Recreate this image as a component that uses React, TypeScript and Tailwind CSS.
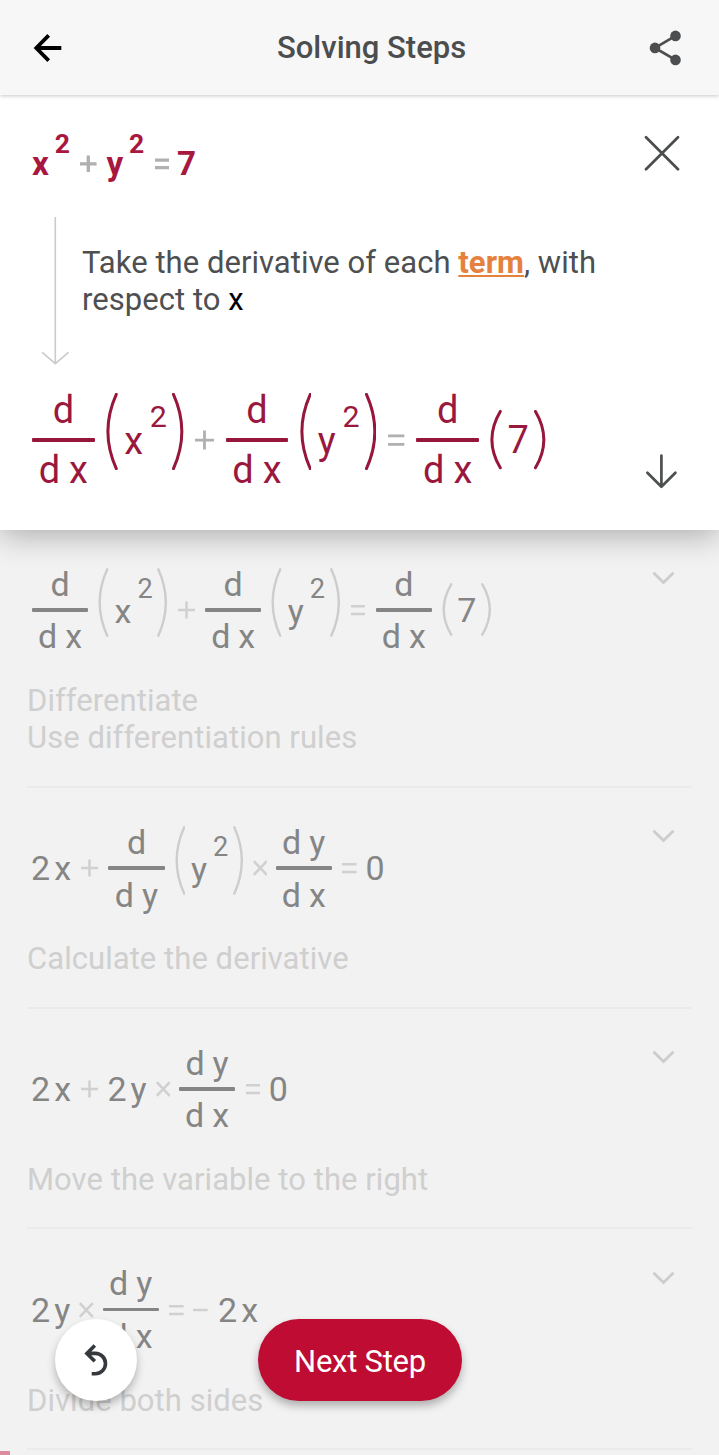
import React from "react";

type Tone = "title" | "active" | "muted";

const toneClass: Record<Tone, { text: string; bar: string; paren: string; op: string; stroke: number }> = {
  title: { text: "text-[#a8173f]", bar: "bg-[#a8173f]", paren: "text-[#a8173f]", op: "text-[#b0b0b0]", stroke: 2.7 },
  active: { text: "text-[#9a183d]", bar: "bg-[#96173b]", paren: "text-[#96173b]", op: "text-[#b0b0b0]", stroke: 2.7 },
  muted: { text: "text-[#858585]", bar: "bg-[#858585]", paren: "text-[#cdcdcd]", op: "text-[#d0d0d0]", stroke: 2.4 },
};

const ToneContext = React.createContext<Tone>("muted");

function Glyph({ children, className = "" }: { children: React.ReactNode; className?: string }) {
  return <span className={`block shrink-0 leading-none ${className}`}>{children}</span>;
}

function Sup({ children }: { children: React.ReactNode }) {
  return <span className="mb-[1.49em] ml-[0.22em] block shrink-0 text-[0.8em] leading-none">{children}</span>;
}

function Fraction({ top, bottom }: { top: string[]; bottom: string[] }) {
  const tone = toneClass[React.useContext(ToneContext)];
  return (
    <span className="flex w-[1.65em] shrink-0 flex-col items-center">
      <span className="flex gap-[0.235em]">
        {top.map((c, i) => (
          <Glyph key={i}>{c}</Glyph>
        ))}
      </span>
      <span className={`my-[0.23em] block h-[0.095em] w-full rounded-[1px] ${tone.bar}`} />
      <span className="flex gap-[0.235em]">
        {bottom.map((c, i) => (
          <Glyph key={i}>{c}</Glyph>
        ))}
      </span>
    </span>
  );
}

function Paren({ side, tall = false }: { side: "left" | "right"; tall?: boolean }) {
  const tone = toneClass[React.useContext(ToneContext)];
  const h = tall ? 69 : 53;
  const d =
    side === "left"
      ? `M9.2 1.3Q-5.8 ${h / 2} 9.2 ${h - 1.3}`
      : `M1.3 1.3Q16.3 ${h / 2} 1.3 ${h - 1.3}`;
  return (
    <svg
      viewBox={`0 0 10.5 ${h}`}
      className={`w-[0.309em] shrink-0 ${tone.paren} ${tall ? "mb-[0.44em] h-[2.03em]" : "h-[1.56em]"}`}
      fill="none"
      stroke="currentColor"
      strokeWidth={tone.stroke}
      strokeLinecap="round"
    >
      <path d={d} />
    </svg>
  );
}

const opPaths = {
  plus: { w: "w-[0.5em] mx-[0.3em]", box: "0 0 17 18", d: "M0 9H17M8.5 0.5V17.5" },
  equals: { w: "w-[0.43em] mx-[0.31em]", box: "0 0 14.6 18", d: "M0 5.3H14.6M0 12.9H14.6" },
  minus: { w: "w-[0.43em] ml-[-0.03em] mr-[0.3em]", box: "0 0 14.6 18", d: "M0 9H14.6" },
  times: { w: "w-[0.43em] ml-[0.27em] mr-[0.25em]", box: "0 0 14.6 18", d: "M0.8 2.2L13.8 15.8M13.8 2.2L0.8 15.8" },
};

function Op({ kind, bold = false }: { kind: keyof typeof opPaths; bold?: boolean }) {
  const tone = toneClass[React.useContext(ToneContext)];
  const p = opPaths[kind];
  return (
    <svg
      viewBox={p.box}
      className={`h-[0.53em] shrink-0 ${p.w} ${tone.op}`}
      fill="none"
      stroke="currentColor"
      strokeWidth={bold ? 3.4 : 2.5}
    >
      <path d={p.d} />
    </svg>
  );
}

function Equation({ tone, className = "", children }: { tone: Tone; className?: string; children: React.ReactNode }) {
  return (
    <ToneContext.Provider value={tone}>
      <div className={`flex shrink-0 items-center ${toneClass[tone].text} ${className}`}>{children}</div>
    </ToneContext.Provider>
  );
}

function SquaredGroup({ base }: { base: string }) {
  return (
    <span className="ml-[0.3em] flex items-center">
      <Paren side="left" tall />
      <Glyph className="mt-[0.04em] ml-[0.17em]">{base}</Glyph>
      <Sup>2</Sup>
      <span className="w-[0.135em]" />
      <Paren side="right" tall />
    </span>
  );
}

function DerivativeOfBothSides() {
  return (
    <>
      <Fraction top={["d"]} bottom={["d", "x"]} />
      <SquaredGroup base="x" />
      <Op kind="plus" />
      <Fraction top={["d"]} bottom={["d", "x"]} />
      <SquaredGroup base="y" />
      <Op kind="equals" />
      <Fraction top={["d"]} bottom={["d", "x"]} />
      <span className="ml-[0.3em] flex items-center">
        <Paren side="left" />
        <Glyph className="mx-[0.14em]">7</Glyph>
        <Paren side="right" />
      </span>
    </>
  );
}

function StepRow({ lines, first = false, children }: { lines: string[]; first?: boolean; children: React.ReactNode }) {
  return (
    <section
      className={`mx-[27px] flex shrink-0 flex-col border-b-2 border-[#ebebeb] ${
        first ? "h-[257.7px] pt-[30px]" : "h-[220.85px] pt-[30.4px]"
      }`}
    >
      <div className="flex items-start justify-between">
        {children}
        <svg className="mt-[11px] mr-[17px] h-[14px] w-[23px]" viewBox="0 0 23 14" fill="none" stroke="#cdcdcd" strokeWidth="2.8">
          <path d="M1.5 1.8L11.5 11.5L21.5 1.8" />
        </svg>
      </div>
      <p className="mt-[22px] text-[31px] leading-[37px] tracking-[0.05px] text-[#cfcfcf]">
        {lines.map((l) => (
          <span key={l} className="block">
            {l}
          </span>
        ))}
      </p>
    </section>
  );
}

export default function App() {
  return (
    <div className="relative flex h-[1455px] w-[719px] flex-col overflow-hidden bg-[#f2f2f2] font-['Roboto',sans-serif]">
      <header className="relative z-20 flex h-[95px] shrink-0 items-center bg-[#f7f7f7] pr-[37px] pl-[33px] shadow-[0_1px_4px_rgba(0,0,0,0.22)]">
        <svg className="h-[30px] w-[30px]" viewBox="33 32.3 30 30" fill="none" stroke="#000" strokeWidth="3.8">
          <path d="M61.3 47.3H37M48.7 34.6L36.3 47.3L48.7 60" />
        </svg>
        <h1 className="mt-[1px] ml-[214px] text-[31px] leading-[36px] font-medium text-[#4b4d4f]">Solving Steps</h1>
        <svg className="ml-auto h-[36px] w-[34px]" viewBox="648 29.4 34 36" fill="#4d4e50" stroke="#4d4e50">
          <path d="M675.5 35.3L655 47.3L675.5 59.3" fill="none" strokeWidth="2.8" />
          <circle cx="675.5" cy="35.3" r="5.3" stroke="none" />
          <circle cx="655" cy="47.3" r="5.3" stroke="none" />
          <circle cx="675.5" cy="59.3" r="5.3" stroke="none" />
        </svg>
      </header>

      <main className="relative z-10 flex h-[435px] shrink-0 flex-col bg-white pt-[18px] shadow-[0_5px_30px_rgba(0,0,0,0.3)]">
        <div className="flex h-[100px] shrink-0 items-start justify-between pr-[39px] pl-[32px]">
          <Equation tone="title" className="mt-[1px] h-full text-[33.2px] font-bold">
            <Glyph>x</Glyph>
            <Sup>2</Sup>
            <Op kind="plus" bold />
            <Glyph>y</Glyph>
            <Sup>2</Sup>
            <Op kind="equals" bold />
            <Glyph className="-ml-[0.06em]">7</Glyph>
          </Equation>
          <svg className="mt-[22px] h-[36px] w-[36px]" viewBox="643.5 135 36 36" fill="none" stroke="#4a4c4e" strokeWidth="2.7" strokeLinecap="round">
            <path d="M645.5 137.2L677.5 169.3M677.5 137.2L645.5 169.3" />
          </svg>
        </div>

        <div className="mt-[4px] flex h-[148px] shrink-0 pl-[41px]">
          <svg className="h-[148px] w-[29px] shrink-0" viewBox="41 217 29 148" fill="none" stroke="#cbcbcb" strokeWidth="1.6">
            <path d="M55.3 217V363.5M42.2 352.3L55.3 363.7L68.5 352.3" />
          </svg>
          <p className="mt-[27px] ml-[12px] text-[31px] leading-[37px] tracking-[0.04px] text-[#4d4f51]">
            Take the derivative of each{" "}
            <a className="font-bold text-[#e5813d] underline decoration-2 underline-offset-[2px]">term</a>, with
            <br />
            respect to <span className="text-black">x</span>
          </p>
        </div>

        <div className="mt-[18px] flex h-[114px] shrink-0 items-start justify-between pr-[41px] pl-[32px]">
          <Equation tone="active" className="h-full text-[38px]">
            <DerivativeOfBothSides />
          </Equation>
          <svg className="mt-[70px] h-[36px] w-[33px]" viewBox="645.3 453 33 36" fill="none" stroke="#4d5050" strokeWidth="2.7" strokeLinecap="round" strokeLinejoin="round">
            <path d="M661.7 455.5V486.5M647.7 472.8L661.7 486.8L675.7 472.8" />
          </svg>
        </div>
      </main>

      <StepRow first lines={["Differentiate", "Use differentiation rules"]}>
        <Equation tone="muted" className="ml-[5px] h-[100px] text-[34px]">
          <DerivativeOfBothSides />
        </Equation>
      </StepRow>

      <StepRow lines={["Calculate the derivative"]}>
        <Equation tone="muted" className="ml-[4px] h-[100px] text-[34px]">
          <Glyph>2</Glyph>
          <Glyph className="ml-[0.12em]">x</Glyph>
          <Op kind="plus" />
          <Fraction top={["d"]} bottom={["d", "y"]} />
          <SquaredGroup base="y" />
          <Op kind="times" />
          <Fraction top={["d", "y"]} bottom={["d", "x"]} />
          <Op kind="equals" />
          <Glyph className="-ml-[0.06em]">0</Glyph>
        </Equation>
      </StepRow>

      <StepRow lines={["Move the variable to the right"]}>
        <Equation tone="muted" className="ml-[4px] h-[100px] text-[34px]">
          <Glyph>2</Glyph>
          <Glyph className="ml-[0.12em]">x</Glyph>
          <Op kind="plus" />
          <Glyph className="-ml-[0.03em]">2</Glyph>
          <Glyph className="ml-[0.12em]">y</Glyph>
          <Op kind="times" />
          <Fraction top={["d", "y"]} bottom={["d", "x"]} />
          <Op kind="equals" />
          <Glyph className="-ml-[0.06em]">0</Glyph>
        </Equation>
      </StepRow>

      <StepRow lines={["Divide both sides"]}>
        <Equation tone="muted" className="ml-[4px] h-[100px] text-[34px]">
          <Glyph>2</Glyph>
          <Glyph className="ml-[0.12em]">y</Glyph>
          <Op kind="times" />
          <Fraction top={["d", "y"]} bottom={["d", "x"]} />
          <Op kind="equals" />
          <Op kind="minus" />
          <Glyph>2</Glyph>
          <Glyph className="ml-[0.12em]">x</Glyph>
        </Equation>
      </StepRow>

      <button className="absolute top-[1319px] left-[55px] z-30 flex h-[82px] w-[82px] items-center justify-center rounded-full bg-white shadow-[0_5px_9px_rgba(0,0,0,0.26)]">
        <svg className="h-[36px] w-[30px]" viewBox="81 1342 30 36" fill="none" stroke="#35383c" strokeWidth="3.6">
          <path d="M94.8 1345.5L86.9 1353.4L94.8 1361.3M87.2 1353.4H95.3A10.1 10.1 0 0 1 95.3 1373.8H91.7" />
        </svg>
      </button>

      <button className="absolute top-[1319px] left-[258px] z-30 flex h-[82px] w-[204px] items-center justify-center rounded-full bg-[#be0c32] shadow-[0_5px_9px_rgba(0,0,0,0.28)]">
        <span className="mt-[4px] text-[31px] leading-[36px] tracking-[-0.25px] text-white">Next Step</span>
      </button>

      <div className="absolute bottom-0 left-0 z-30 h-[4px] w-[10px] bg-[#dc8c9e]" />
    </div>
  );
}
